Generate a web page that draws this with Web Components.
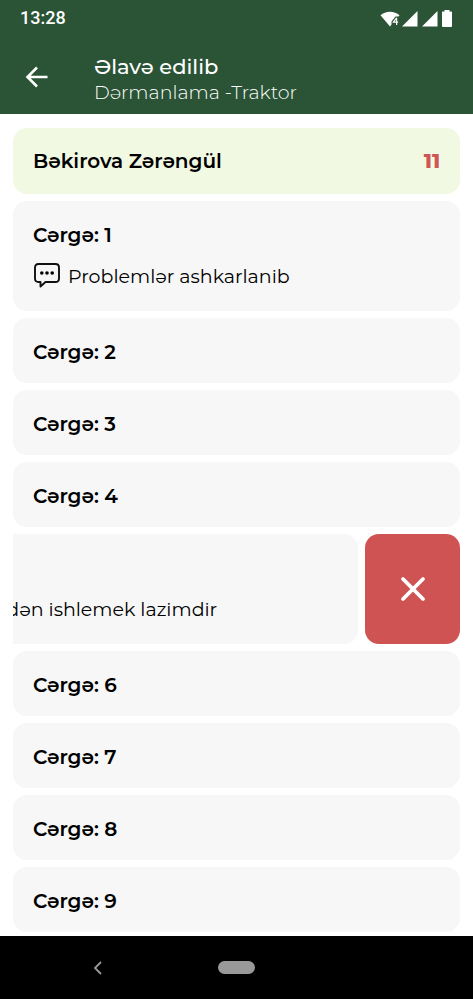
<!DOCTYPE html>
<html lang="az">
<head>
<meta charset="utf-8">
<meta name="viewport" content="width=device-width, initial-scale=1">
<title>Əlavə edilib</title>
<style>
  html, body { margin: 0; height: 100%; }
  body { background: #fff; font-family: Montserrat, Inter, "Noto Sans", sans-serif; color: #000; }
</style>
</head>
<body>
<field-screen></field-screen>

<script>
const define = (name, html) => {
  const template = document.createElement('template');
  template.innerHTML = html;
  customElements.define(name, class extends HTMLElement {
    constructor() {
      super();
      this.attachShadow({ mode: 'open' }).append(template.content.cloneNode(true));
    }
  });
};

define('status-bar', `
<style>
  :host { display: flex; align-items: center; justify-content: space-between; height: 36px; padding: 0 20px; color: #fff; font: 500 18px/20px Roboto, sans-serif; }
  svg { display: block; }
</style>
<time>13:28</time>
<svg width="73" height="20" viewBox="0 0 73 20" fill="#fff" aria-hidden="true">
  <path d="M0.500 7.200C5.500 2.500 14.500 2.500 19.500 7.200L18.500 8.500H15.500L11.500 13.500V16.500L10 18.500Z"/>
  <path d="M16.600 9.800L13.400 14.200H18.200M16.600 9.800V17" fill="none" stroke="#fff" stroke-width="1.200"/>
  <path d="M37.500 3V18.500H22ZM57.500 3V18.500H42ZM64.500 2H69.500V3.500H71.500Q72 3.500 72 4V18Q72 19 71 19H63Q62 19 62 18V4Q62 3.500 62.500 3.500H64.500Z"/>
</svg>`);

define('app-bar', `
<style>
  :host { display: flex; align-items: center; height: 78px; padding: 4px 20px 0; box-sizing: border-box; color: #fff; }
  button { display: grid; place-items: center; width: 34px; height: 34px; margin: 0 40px 0 0; padding: 0; border: 0; background: none; color: inherit; }
  .titles { display: flex; flex-direction: column; padding-top: 6px; }
  ::slotted([slot="title"]) { margin: 0; font-size: 21px; line-height: 26px; font-weight: 500; }
  ::slotted([slot="subtitle"]) { margin: 0; font-size: 19px; line-height: 26px; font-weight: 300; }
</style>
<button type="button" aria-label="Geri">
  <svg width="24" height="24" viewBox="0 0 24 24" fill="none" stroke="currentColor" stroke-width="2.600"><path d="M22.500 12H3M12 2.500L2.500 12L12 21.500"/></svg>
</button>
<div class="titles"><slot name="title"></slot><slot name="subtitle"></slot></div>`);

define('person-card', `
<style>
  :host { display: flex; align-items: center; justify-content: space-between; height: 66px; padding: 0 20px; box-sizing: border-box; border-radius: 14px; background: #f1f9e3; font-size: 20px; line-height: 24px; font-weight: 600; }
  ::slotted(h2) { margin: 0; font: inherit; }
  .count { color: #cf5656; font-weight: 800; }
</style>
<slot></slot>
<span class="count"><slot name="count"></slot></span>`);

define('line-note', `
<style>
  :host { display: flex; align-items: flex-start; gap: 7px; margin-top: 15px; font-size: 19px; line-height: 30px; font-weight: 400; white-space: nowrap; }
  svg { flex: none; }
</style>
<svg width="28" height="28" viewBox="0 0 28 28" aria-hidden="true">
  <path d="M5.500 2H22.500Q26 2 26 5.500V16.500Q26 20 22.500 20H12.500L7.500 24.500V20H5.500Q2 20 2 16.500V5.500Q2 2 5.500 2Z" fill="none" stroke="#111" stroke-width="1.900" stroke-linejoin="round"/>
  <circle cx="8.800" cy="11" r="1.800"/><circle cx="14" cy="11" r="1.800"/><circle cx="19.200" cy="11" r="1.800"/>
</svg>
<span><slot></slot></span>`);

define('line-card', `
<style>
  :host { display: block; min-height: 65px; padding: 22px 20px 0; box-sizing: border-box; border-radius: 14px; background: #f7f7f7; font-weight: 600; }
  :host([noted]) { min-height: 110px; }
  :host([swiped]) { font-weight: 500; }
  ::slotted(h3) { margin: 0; font-size: 20px; line-height: 24px; font-weight: inherit; }
</style>
<slot></slot>`);

define('swipe-row', `
<style>
  :host { display: flex; justify-content: flex-end; gap: 7px; overflow: hidden; }
  ::slotted(line-card) { flex: 0 0 100%; }
  button { flex: 0 0 95px; display: grid; place-items: center; margin: 0; padding: 0; border: 0; border-radius: 14px; background: #cf5353; color: #fff; }
</style>
<slot></slot>
<button type="button" aria-label="Sil">
  <svg width="28" height="28" viewBox="0 0 28 28" fill="none" stroke="currentColor" stroke-width="3.800" stroke-linecap="round"><path d="M4 4L24 24M24 4L4 24"/></svg>
</button>`);

define('nav-bar', `
<style>
  :host { display: grid; grid-template-columns: 1fr auto 1fr; align-items: center; height: 63px; background: #000; }
  button { display: grid; place-items: center; justify-self: center; padding: 0; border: 0; background: none; color: #999; }
  .back { width: 34px; height: 34px; margin-right: 24px; }
  .home { width: 37px; height: 13px; border-radius: 7px; background: #999; }
</style>
<button class="back" type="button" aria-label="Geri"><svg width="12" height="16" viewBox="0 0 12 16" fill="none" stroke="currentColor" stroke-width="1.800"><path d="M10 2L4 8L10 14"/></svg></button>
<button class="home" type="button" aria-label="Əsas ekran"></button>`);

define('field-screen', `
<style>
  :host { display: flex; flex-direction: column; height: 100vh; }
  header { flex: none; background: #2b5436; }
  main { flex: 1; min-height: 0; overflow: hidden auto; display: flex; flex-direction: column; gap: 7px; padding: 14px 13px 0; box-sizing: border-box; }
  main > * { flex: none; }
  nav-bar { flex: none; }
</style>
<header>
  <status-bar></status-bar>
  <app-bar><h1 slot="title">Əlavə edilib</h1><p slot="subtitle">Dərmanlama -Traktor</p></app-bar>
</header>
<main>
  <person-card><h2>Bəkirova Zərəngül</h2><span slot="count">11</span></person-card>
  <line-card noted><h3>Cərgə: 1</h3><line-note>Problemlər ashkarlanib</line-note></line-card>
  <line-card><h3>Cərgə: 2</h3></line-card>
  <line-card><h3>Cərgə: 3</h3></line-card>
  <line-card><h3>Cərgə: 4</h3></line-card>
  <swipe-row><line-card noted swiped><h3>Cərgə: 5</h3><line-note>Yenidən ishlemek lazimdir</line-note></line-card></swipe-row>
  <line-card><h3>Cərgə: 6</h3></line-card>
  <line-card><h3>Cərgə: 7</h3></line-card>
  <line-card><h3>Cərgə: 8</h3></line-card>
  <line-card><h3>Cərgə: 9</h3></line-card>
</main>
<nav-bar></nav-bar>`);
</script>
</body>
</html>
